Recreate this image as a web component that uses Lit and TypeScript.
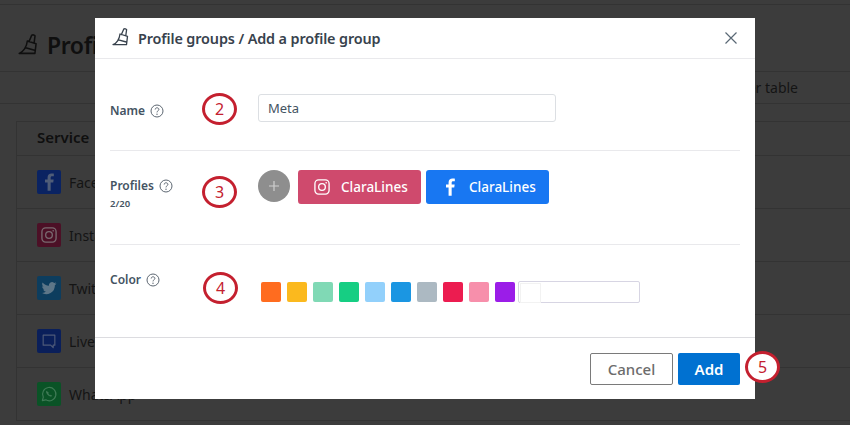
import { LitElement, html, css, svg } from "lit";
import { customElement } from "lit/decorators.js";

const brush = svg`<path d="M11.800 1 9.400 6.600M11.800 1c1-.5 2.400-.2 2.800.6L13.800 7.600M8 6l7.500 2.300-1 8.300H1c3.500-1 6.500-5.600 7-10.600zM6.500 11.800l7.800 2.200" fill="none" stroke="currentColor" stroke-width="1.300" stroke-linejoin="round" stroke-linecap="round"/>`;
const help = html`<svg class="help" viewBox="0 0 14 14"><circle cx="7" cy="7" r="6" fill="none" stroke="currentColor"/><path d="M5.200 5.500C5.200 4.400 6 3.800 7 3.800s1.900.6 1.900 1.600c0 1.400-1.900 1.300-1.900 3" fill="none" stroke="currentColor"/><circle cx="7" cy="10.200" r=".7" fill="currentColor"/></svg>`;
const insta = svg`<rect x="3.500" y="3.500" width="17" height="17" rx="4.500" fill="none" stroke="currentColor" stroke-width="1.600"/><circle cx="12" cy="12" r="4" fill="none" stroke="currentColor" stroke-width="1.600"/><circle cx="17" cy="7" r="1" fill="currentColor"/>`;
const fb = svg`<path d="M14 22.500v-9.800h3.100l.5-3.600H14V7c0-1.100.3-1.800 1.900-1.800h1.900V2c-.4 0-1.500-.1-2.800-.1-2.800 0-4.700 1.700-4.700 4.800v2.400H7.200v3.600h3.100v9.800z" fill="currentColor"/>`;
const tw = svg`<path d="M21 6.500c-.7.300-1.400.5-2.100.6.800-.5 1.300-1.200 1.600-2-.7.400-1.500.7-2.300.9a3.700 3.700 0 0 0-6.300 3.400C8.800 9.200 6.100 7.800 4.300 5.500c-1 1.700-.5 3.800 1.100 4.900-.6 0-1.200-.2-1.700-.5 0 1.800 1.300 3.300 3 3.700-.5.100-1.100.2-1.700.1.500 1.500 1.800 2.500 3.500 2.600A7.500 7.500 0 0 1 3 17.800 10.500 10.500 0 0 0 19.100 8.500c.8-.5 1.400-1.200 1.900-2z" fill="currentColor"/>`;
const chat = svg`<path d="M5 5h14v12h-2v3l-3-3H5z" fill="none" stroke="currentColor" stroke-width="1.400" stroke-linejoin="round"/>`;
const wa = svg`<path d="M4 20l1.200-4.200A8 8 0 1 1 8.200 19z" fill="none" stroke="currentColor" stroke-width="1.400" stroke-linejoin="round"/><path d="M9 8c-1 1-.5 3 1.200 4.800S14.500 15.500 16 14.500l-1.800-1.500-1 .6-2-2 .6-1z" fill="currentColor"/>`;

const rows = [
  ["Facebook", "#0a2362", "#4f5d78", fb],
  ["Instagram", "#4c1026", "#796a70", insta],
  ["Twitter", "#0d3d5e", "#5d7688", tw],
  ["Live Chat", "#0a1f5a", "#4e5a78", chat],
  ["WhatsApp", "#0a5326", "#3f7a55", wa],
] as const;
const swatches = ["#ff6c1f", "#fbb91e", "#80d9b5", "#16ce83", "#92d0fb", "#1b96e2", "#acb9c2", "#ec1c50", "#f78fab", "#9b1de8"];

@customElement("app-root")
export class AppRoot extends LitElement {
  static styles = css`
    :host { display: block; width: 850px; height: 425px; position: relative; overflow: hidden; background: #3c3c3c; font-family: "Noto Sans", "Open Sans", sans-serif; color: #3d4b59; }
    .page { height: 425px; display: flex; flex-direction: column; padding: 4px 0 0 16px; box-sizing: border-box; position: relative; }
    .topline { position: absolute; left: 0; right: 0; top: 4px; height: 1px; background: #333; }
    .page-title { display: flex; align-items: center; gap: 8px; height: 67px; padding: 14px 0 0 2px; box-sizing: border-box; color: #0f0f0f; font-size: 23px; font-weight: 600; letter-spacing: -.4px; }
    .page-title svg { width: 21px; height: 21px; }
    .tools { margin-left: -16px; height: 31px; border-top: 1px solid #333; border-bottom: 1px solid #333; display: flex; justify-content: flex-end; align-items: center; padding-right: 52px; font-size: 14px; color: #141414; }
    .table { margin-top: 17px; border: 1px solid #333; border-right: 0; flex: none; }
    .th { height: 33px; box-sizing: border-box; padding: 0 20px 4px; font-size: 15px; font-weight: 600; color: #0f0f0f; display: flex; align-items: center; }
    .tr { height: 52px; border-top: 1px solid #333; padding: 0 20px; display: flex; align-items: center; gap: 8px; font-size: 14px; color: #141414; }
    .ico { width: 24px; height: 24px; border-radius: 2px; display: flex; align-items: center; justify-content: center; }
    .ico svg { width: 20px; height: 20px; }
    .modal { position: absolute; left: 95px; top: 18px; width: 660px; height: 381px; background: #fff; display: flex; flex-direction: column; }
    .head { height: 41px; box-sizing: border-box; border-bottom: 1px solid #e9e9ec; display: flex; align-items: center; padding: 0 17px; gap: 8px; font-size: 14.400px; font-weight: 600; color: #38424d; flex: none; }
    .head svg.b { width: 18px; height: 18px; color: #38424d; margin-top: -2px; }
    .head span { flex: 1; letter-spacing: -.12px; }
    .close { width: 14px; height: 14px; color: #5a6875; }
    .body { flex: 1; padding: 0 15px; }
    .row { display: grid; grid-template-columns: 148px 1fr; border-bottom: 1px solid #e9e9ec; box-sizing: border-box; align-items: start; }
    .row:last-child { border-bottom: 0; }
    .r1 { height: 92px; padding-top: 35px; }
    .r2 { height: 94px; padding-top: 19px; }
    .r3 { height: 90px; padding-top: 27px; }
    .r1 .label { margin-top: 9px; }
    .r2 .label { margin-top: 8px; }
    .label { font-size: 12px; font-weight: 600; color: #445362; display: flex; align-items: center; gap: 5px; line-height: 16px; }
    .sub { font-size: 9.500px; font-weight: 600; color: #445362; line-height: 14px; margin-top: 3px; }
    .help { width: 14px; height: 14px; color: #5d6772; }
    input { width: 298px; height: 28px; box-sizing: border-box; border: 1px solid #dcdfe3; border-radius: 3px; padding: 0 9px; font: 400 13px "Noto Sans", sans-serif; color: #445362; background: #fff; outline: none; }
    .profiles { display: flex; align-items: flex-start; gap: 5px; }
    .plus { width: 32px; height: 32px; border-radius: 50%; background: #8e8e8e; color: #cfcfcf; display: flex; align-items: center; justify-content: center; margin-right: 3px; }
    .plus svg { width: 12px; height: 12px; }
    .chip { width: 123px; height: 34px; border-radius: 3px; color: #fff; font-size: 13.500px; font-weight: 500; display: flex; align-items: center; box-sizing: border-box; padding-left: 14px; gap: 9px; }
    .chip svg { width: 20px; height: 20px; }
    .ig { background: #cf4a6d; }
    .fbk { background: #1877f2; }
    .colors { display: flex; align-items: center; gap: 6px; margin-top: 9px; padding-left: 3px; }
    .sw { width: 20px; height: 20px; border-radius: 2px; }
    .custom { width: 122px; height: 22px; box-sizing: border-box; border: 1px solid #d7d5e3; border-radius: 2px; margin-left: -3px; padding: 1px; }
    .custom div { width: 19px; height: 18px; border: 1px solid #f2f2f2; }
    .foot { height: 62px; box-sizing: border-box; flex: none; border-top: 1px solid #dcdce0; display: flex; justify-content: flex-end; align-items: center; gap: 5px; padding: 0 15px 0 0; }
    button { height: 32px; border-radius: 2px; font: 500 15px "Noto Sans", sans-serif; box-sizing: border-box; }
    .cancel { width: 83px; background: #fff; border: 1px solid #7a7a7a; color: #6c6c6c; }
    .add { width: 62px; background: #0071d1; border: 0; color: #fff; font-weight: 600; }
    .n { position: absolute; width: 35px; height: 32px; box-sizing: border-box; border: 3px solid #c4202f; border-radius: 50%; background: #fff; color: #c4202f; font-size: 16px; display: flex; align-items: center; justify-content: center; }
    .n2 { left: 202px; top: 93px; }
    .n3 { left: 202px; top: 176px; }
    .n4 { left: 203px; top: 272px; }
    .n5 { left: 745px; top: 351px; }
  `;
  render() {
    return html`
      <div class="page">
        <div class="topline"></div>
        <div class="page-title"><svg viewBox="0 0 18 18">${brush}</svg>Profile groups</div>
        <div class="tools">Filter table</div>
        <div class="table">
          <div class="th">Service</div>
          ${rows.map(([n, c, f, i]) => html`<div class="tr"><div class="ico" style="background:${c};color:${f}"><svg viewBox="0 0 24 24">${i}</svg></div>${n}</div>`)}
        </div>
      </div>
      <div class="modal">
        <div class="head">
          <svg class="b" viewBox="0 0 18 18">${brush}</svg>
          <span>Profile groups / Add a profile group</span>
          <svg class="close" viewBox="0 0 14 14"><path d="M1.500 1.500l11 11M12.500 1.500l-11 11" stroke="currentColor" stroke-width="1.200"/></svg>
        </div>
        <div class="body">
          <div class="row r1">
            <div class="label">Name ${help}</div>
            <input value="Meta" />
          </div>
          <div class="row r2">
            <div><div class="label">Profiles ${help}</div><div class="sub">2/20</div></div>
            <div class="profiles">
              <div class="plus"><svg viewBox="0 0 12 12"><path d="M6 1v10M1 6h10" stroke="currentColor" stroke-width="1.200"/></svg></div>
              <div class="chip ig"><svg viewBox="0 0 24 24">${insta}</svg>ClaraLines</div>
              <div class="chip fbk"><svg viewBox="0 0 24 24">${fb}</svg>ClaraLines</div>
            </div>
          </div>
          <div class="row r3">
            <div class="label">Color ${help}</div>
            <div class="colors">
              ${swatches.map((c) => html`<div class="sw" style="background:${c}"></div>`)}
              <div class="custom"><div></div></div>
            </div>
          </div>
        </div>
        <div class="foot">
          <button class="cancel">Cancel</button>
          <button class="add">Add</button>
        </div>
      </div>
      <div class="n n2">2</div><div class="n n3">3</div><div class="n n4">4</div><div class="n n5">5</div>
    `;
  }
}
